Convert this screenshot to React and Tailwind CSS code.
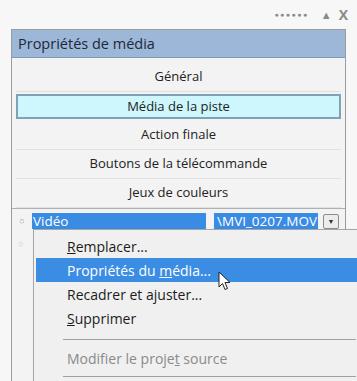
import React from 'react'

const tabs = ['Général', 'Média de la piste', 'Action finale', 'Boutons de la télécommande', 'Jeux de couleurs']

const Cursor = () => (
  <svg width="14" height="21" viewBox="0 0 14 21" className="absolute left-[218px] top-[271px]">
    <path d="M1 1 L1 16 L4.5 12.5 L7 18.5 L9.5 17.5 L7 11.5 L12 11.5 Z" fill="#fff" stroke="#222" strokeWidth="1" strokeLinejoin="round" />
  </svg>
)

const MenuItem = ({ children, active, muted }) => (
  <div
    className={
      active
        ? 'h-[24px] mx-[2px] pl-[31px] flex items-center bg-[#3b8de4] text-white'
        : muted
        ? 'h-[24px] mx-[2px] pl-[31px] flex items-center text-[#8a8a8a]'
        : 'h-[24px] mx-[2px] pl-[31px] flex items-center text-[#1c1c1c] font-medium'
    }
  >
    {children}
  </div>
)

const App = () => {
  return (
    <div className="relative w-[357px] h-[381px] overflow-hidden bg-[#f7f7f7] font-['Open_Sans',sans-serif]">
      {/* top bar */}
      <div className="h-[29px] flex items-center justify-end pr-[9px] text-[#8a8a8a]">
        <span className="text-[7px] tracking-[1.5px] leading-none">●●●●●●</span>
        <span className="ml-[12px] text-[11px] leading-none">▲</span>
        <span className="ml-[7px] text-[14px] font-bold leading-none">X</span>
      </div>

      {/* panel */}
      <div className="ml-[11px] w-[335px] h-[360px] border-x border-t border-[#9c9c9c] bg-[#f3f3f3]">
        <div className="h-[28px] bg-[#9db7d8] flex items-center pl-[6px] text-[14.5px] text-[#1e2838] border-b border-[#7f98b8]">
          Propriétés de média
        </div>
        <div className="pt-[5px] px-[4px] border-b border-[#b0b0b0]">
          {tabs.map((t, i) =>
            i === 1 ? (
              <div key={t} className="h-[29px] py-[2px]">
                <div className="h-full flex items-center justify-center bg-[#cdf7fc] border-2 border-[#7fa3b6] text-[13px] text-[#222]">
                  {t}
                </div>
              </div>
            ) : (
              <div key={t} className="h-[29px] flex items-center justify-center border-b border-[#e0e0e0] text-[13px] text-[#222]">
                {t}
              </div>
            )
          )}
        </div>

        <div className="h-[16px] mt-[4px] flex items-center text-[13.5px] text-white">
          <span className="w-[20px] text-[9px] text-[#8a9bb0] text-center">○</span>
          <div className="w-[174px] h-full bg-[#3a8be3] pl-[1px] leading-[16px]">Vidéo</div>
          <div className="ml-[8px] w-[104px] h-full bg-[#3a8be3] leading-[16px] text-right pr-[1px] whitespace-nowrap">\MVI_0207.MOV</div>
          <div className="ml-[5px] w-[16px] h-[15px] border border-[#8c8c8c] rounded-[2px] bg-[#ececec] flex items-center justify-center">
            <span className="text-[7px] text-[#333] leading-none">▼</span>
          </div>
        </div>
        <div className="mt-[8px] pl-[6px] text-[9px] text-[#c8c8c8]">○</div>
      </div>

      {/* context menu */}
      <div className="absolute left-[33px] top-[229px] w-[330px] h-[160px] bg-[#f0f0f0] border border-[#a6a6a6] shadow-[2px_2px_3px_rgba(0,0,0,0.2)] pt-[4px] text-[14px]">
        <MenuItem>
          <span><u>R</u>emplacer...</span>
        </MenuItem>
        <MenuItem active>
          <span>Propriétés du <u>m</u>édia...</span>
        </MenuItem>
        <MenuItem>
          <span>Recadrer et ajuster...</span>
        </MenuItem>
        <MenuItem>
          <span><u>S</u>upprimer</span>
        </MenuItem>
        <div className="ml-[29px] mr-[6px] mt-[9px] mb-[5px] h-[2px] border-t border-[#a0a0a0]" />
        <MenuItem muted>
          <span>Modifier le proje<u>t</u> source</span>
        </MenuItem>
        <div className="ml-[29px] mr-[6px] mt-[6px] h-[2px] border-t border-[#a0a0a0]" />
      </div>

      <Cursor />
    </div>
  )
}

export default App
